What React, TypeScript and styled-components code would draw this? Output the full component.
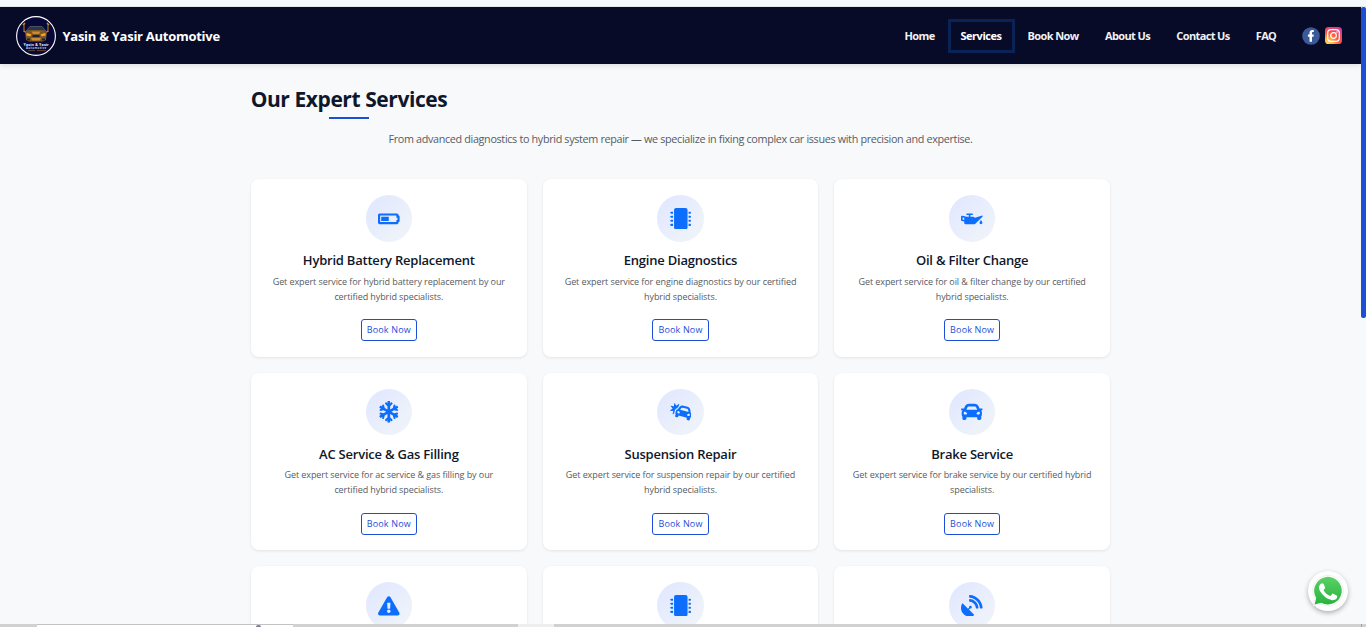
import React from "react";
import styled, { createGlobalStyle } from "styled-components";
import {
  FaBatteryHalf,
  FaCar,
  FaCarCrash,
  FaExclamationTriangle,
  FaMicrochip,
  FaOilCan,
  FaSatelliteDish,
  FaSnowflake,
} from "react-icons/fa";

const GlobalStyle = createGlobalStyle`
  *, *::before, *::after { box-sizing: border-box; }
  body {
    margin: 0;
    overflow: hidden;
    background: #f8f9fb;
    font-family: "Segoe UI", "Open Sans", "Noto Sans", sans-serif;
  }
`;

const Screen = styled.div`
  height: 627px;
  display: flex;
  flex-direction: column;
  overflow: hidden;
`;

const TopStrip = styled.div`
  flex: 0 0 7px;
  background: #f5f9fe;
  border-bottom: 1px solid #dfe7ef;
`;

const Viewport = styled.div`
  flex: 1;
  min-height: 0;
  display: flex;
`;

const Page = styled.div`
  flex: 1;
  min-width: 0;
  overflow: hidden;
  position: relative;
`;

const ScrollTrack = styled.div`
  flex: 0 0 5px;
  background: #f8f9fb;
`;

const ScrollThumb = styled.div`
  height: 311px;
  border-radius: 2px;
  background: #1d4ed8;
`;

const Header = styled.header`
  height: 57px;
  padding: 0 19px 0 16px;
  display: flex;
  align-items: center;
  justify-content: space-between;
  background: #070b28;
  box-shadow: 0 2px 5px rgba(0, 0, 0, 0.1);
`;

const Brand = styled.div`
  display: flex;
  align-items: center;
  gap: 6.5px;
  color: #fff;
  font-size: 13px;
  font-weight: 700;
  letter-spacing: -0.27px;
  white-space: nowrap;
`;

const Nav = styled.nav`
  display: flex;
  align-items: center;
`;

const NavItem = styled.a<{ $width: number; $active?: boolean }>`
  width: ${(p) => p.$width}px;
  height: 34px;
  display: flex;
  align-items: center;
  justify-content: center;
  border: 3px solid ${(p) => (p.$active ? "#0a2357" : "transparent")};
  color: ${(p) => (p.$active ? "#fff" : "#f0f1f5")};
  font-size: 11px;
  font-weight: 700;
  letter-spacing: ${(p) => (p.$active ? "-0.46px" : "-0.62px")};
  white-space: nowrap;
`;

const Socials = styled.div`
  display: flex;
  gap: 5px;
  margin-left: 12.5px;
`;

const Main = styled.main`
  width: 859px;
  margin: 0 auto 0 251px;
`;

const Heading = styled.h1`
  width: 196px;
  margin: 0;
  padding-top: 19px;
  display: flex;
  flex-direction: column;
  align-items: center;
  color: #0f172a;
  font-size: 21px;
  line-height: 32px;
  font-weight: 700;
  letter-spacing: -0.42px;
  white-space: nowrap;

  &::after {
    content: "";
    width: 40px;
    height: 2px;
    margin-top: 2px;
    background: #1d4ed8;
  }
`;

const Lead = styled.p`
  margin: 11px 0 31.4px;
  color: #555b63;
  font-size: 10.8px;
  line-height: 18px;
  text-align: center;
  letter-spacing: -0.335px;
  white-space: nowrap;
`;

const Grid = styled.div`
  display: grid;
  grid-template-columns: repeat(3, 1fr);
  gap: 16px;
`;

const Card = styled.article`
  height: 177.5px;
  padding-top: 16px;
  display: flex;
  flex-direction: column;
  align-items: center;
  border-radius: 8px;
  background: #fff;
  box-shadow: 0 1px 3px rgba(0, 0, 0, 0.09);
`;

const IconDisc = styled.div`
  width: 46.4px;
  height: 46.4px;
  display: grid;
  place-items: center;
  border-radius: 50%;
  background: linear-gradient(135deg, #e0e7ff, #f1f5f9);
  color: #0d6efd;
  font-size: 21.6px;

  svg { display: block; }
`;

const CardTitle = styled.h2`
  margin: 9.6px 0 0;
  color: #0f172a;
  font-size: 13px;
  line-height: 18px;
  font-weight: 600;
  letter-spacing: -0.22px;
  white-space: nowrap;
`;

const CardText = styled.p`
  margin: 4.4px 0 0;
  color: #555b63;
  font-size: 9px;
  line-height: 15px;
  text-align: center;
  letter-spacing: -0.08px;
  white-space: nowrap;
`;

const BookButton = styled.button`
  width: 56.5px;
  height: 22px;
  margin-top: 15.4px;
  padding: 0 0 0.6px;
  border: 1px solid #1d4ed8;
  border-radius: 3px;
  background: #fff;
  color: #1d4ed8;
  font: inherit;
  font-size: 9px;
  letter-spacing: 0.15px;
  white-space: nowrap;
`;

const ChatButton = styled.div`
  position: absolute;
  right: 13px;
  bottom: 13px;
  width: 40px;
  height: 40px;
  display: grid;
  place-items: center;
  border-radius: 50%;
  background: #fff;
  box-shadow: 0 2px 5px rgba(0, 0, 0, 0.3);
`;

const BottomStrip = styled.div`
  flex: 0 0 3px;
  display: flex;
  background: #d1d1d1;
`;

const StripTab = styled.div`
  width: 256px;
  margin-left: 37px;
  border-top: 1px solid #c2c2c2;
  background: #fff;

  &::after {
    content: "";
    display: block;
    width: 5px;
    height: 2px;
    margin-left: 219px;
    border-radius: 3px 3px 0 0;
    background: #8a7c92;
  }
`;

const StripGap = styled.div`
  width: 36px;
  margin-left: 225px;
  background: #eeeeee;
`;

const StripEdge = styled.div`
  width: 1px;
  margin-left: 807px;
  background: #a0a0a0;
`;

const BrandLogo = () => (
  <svg width="40" height="40" viewBox="0 0 40 40">
    <circle cx="20" cy="20" r="19.4" fill="#070838" stroke="#fff" strokeWidth="1.1" />
    <path d="M8 8v8M32 8v8" stroke="#a86b1c" strokeWidth="1.2" />
    <path d="M7 9l2-2M33 9l-2-2M8 15l4 3M32 15l-4 3" stroke="#d18a22" strokeWidth="1.4" />
    <path d="M10 15l4-4.5h12l4 4.5z" fill="#27364c" stroke="#56606a" strokeWidth="0.8" />
    <path d="M9 15.5l4.5-1.5h13l4.5 1.5-1 8.5-3 1.5h-14l-3-1.5z" fill="#7c5526" />
    <path d="M10.5 17l5 1.3-1 2-4-.6zM29.5 17l-5 1.3 1 2 4-.6z" fill="#f2a32b" />
    <path d="M15.5 15.5h9l-1.5 2.5h-6zM15 22h10l-1.3 2.6h-7.4z" fill="#d08a2c" />
    <path d="M16.5 19h7v2h-7zM11 22.5h3v2h-3zM26 22.5h3v2h-3z" fill="#1a2440" />
    <text x="20" y="29.8" fill="#eef" fontSize="3.7" fontWeight="700" textAnchor="middle" textLength="25">Yasin &amp; Yasir</text>
    <text x="20" y="32.6" fill="#ccd" fontSize="2.8" textAnchor="middle" textLength="20">Automotive</text>
    <path d="M12 34.6h7M21 34.6h9" stroke="#8c5c1c" strokeWidth="0.7" />
  </svg>
);

const FacebookLogo = () => (
  <svg width="18" height="18" viewBox="0 0 18 18">
    <circle cx="9" cy="9" r="8.8" fill="#3b5998" />
    <path
      d="M7.5 14.8V9.8H5.9V7.5h1.6V6c0-1.9 1.1-3 2.8-3 .8 0 1.5.1 1.5.1v2h-.8c-.8 0-1 .5-1 1v1.4h1.8l-.3 2.3H10v5z"
      fill="#fff"
    />
  </svg>
);

const InstagramLogo = () => (
  <svg width="17" height="17" viewBox="0 0 17 17">
    <defs>
      <radialGradient id="insta" cx="0.15" cy="1.02" r="1.25">
        <stop offset="0" stopColor="#ffdd55" />
        <stop offset="0.25" stopColor="#ffb84a" />
        <stop offset="0.55" stopColor="#ff543e" />
        <stop offset="1" stopColor="#c837ab" />
      </radialGradient>
    </defs>
    <rect width="17" height="17" rx="3.6" fill="url(#insta)" />
    <g fill="none" stroke="#fff" strokeWidth="1.2">
      <rect x="2.7" y="2.7" width="11.6" height="11.6" rx="3.3" />
      <circle cx="8.5" cy="8.5" r="2.8" />
    </g>
    <circle cx="12" cy="5" r="0.8" fill="#fff" />
  </svg>
);

const WhatsAppLogo = () => (
  <svg width="32" height="32" viewBox="0 0 32 32">
    <defs>
      <linearGradient id="wa" x1="0" y1="0" x2="0" y2="1">
        <stop offset="0" stopColor="#5bd066" />
        <stop offset="1" stopColor="#27b43e" />
      </linearGradient>
    </defs>
    <path
      d="M1 30.9l2-7.3A15.2 15.2 0 1 1 8.6 29z"
      fill="#fff"
      stroke="#e6e6e6"
      strokeWidth="0.7"
    />
    <path d="M2.6 29.5l1.6-6.6A13.8 13.8 0 1 1 9.2 27.7z" fill="url(#wa)" />
    <path
      d="M11.8 9.2c-.3-.7-.6-.8-1-.8h-.9c-.4 0-.9.1-1.3.6-.5.5-1.6 1.6-1.6 3.7s1.6 4.3 1.9 4.6c.2.3 3.1 4.9 7.6 6.7 3.8 1.5 4.6 1.2 5.4 1.1.8-.1 2.6-1.1 3-2.1.4-1 .4-1.9.3-2.1-.2-.4-.6-.5-1-.7l-3-1.5c-.5-.1-.8-.2-1.1.3l-1.4 1.7c-.3.3-.5.3-1 .1-.4-.2-1.9-.7-3.5-2.2-1.3-1.2-2.2-2.6-2.5-3.1-.2-.4 0-.7.2-.9l.7-.8c.2-.3.3-.5.4-.8.2-.3.1-.5 0-.8z"
      fill="#fff"
    />
  </svg>
);

const navItems = [
  { label: "Home", width: 56 },
  { label: "Services", width: 67, active: true },
  { label: "Book Now", width: 77 },
  { label: "About Us", width: 72 },
  { label: "Contact Us", width: 79 },
  { label: "FAQ", width: 47 },
];

const services = [
  { icon: FaBatteryHalf, title: "Hybrid Battery Replacement", lines: ["Get expert service for hybrid battery replacement by our", "certified hybrid specialists."] },
  { icon: FaMicrochip, title: "Engine Diagnostics", lines: ["Get expert service for engine diagnostics by our certified", "hybrid specialists."] },
  { icon: FaOilCan, title: "Oil & Filter Change", lines: ["Get expert service for oil & filter change by our certified", "hybrid specialists."] },
  { icon: FaSnowflake, title: "AC Service & Gas Filling", lines: ["Get expert service for ac service & gas filling by our", "certified hybrid specialists."] },
  { icon: FaCarCrash, title: "Suspension Repair", lines: ["Get expert service for suspension repair by our certified", "hybrid specialists."] },
  { icon: FaCar, title: "Brake Service", lines: ["Get expert service for brake service by our certified hybrid", "specialists."] },
  { icon: FaExclamationTriangle },
  { icon: FaMicrochip },
  { icon: FaSatelliteDish },
];

export default function App() {
  return (
    <Screen>
      <GlobalStyle />
      <TopStrip />
      <Viewport>
        <Page>
          <Header>
            <Brand>
              <BrandLogo />
              Yasin &amp; Yasir Automotive
            </Brand>
            <Nav>
              {navItems.map((n) => (
                <NavItem key={n.label} $width={n.width} $active={n.active}>
                  {n.label}
                </NavItem>
              ))}
              <Socials>
                <FacebookLogo />
                <InstagramLogo />
              </Socials>
            </Nav>
          </Header>
          <Main>
            <Heading>Our Expert Services</Heading>
            <Lead>
              From advanced diagnostics to hybrid system repair — we specialize in fixing complex car issues with
              precision and expertise.
            </Lead>
            <Grid>
              {services.map(({ icon: Icon, title, lines }, i) => (
                <Card key={i}>
                  <IconDisc>
                    <Icon />
                  </IconDisc>
                  {title && lines && (
                    <>
                      <CardTitle>{title}</CardTitle>
                      <CardText>
                        {lines[0]}
                        <br />
                        {lines[1]}
                      </CardText>
                      <BookButton>Book Now</BookButton>
                    </>
                  )}
                </Card>
              ))}
            </Grid>
          </Main>
          <ChatButton>
            <WhatsAppLogo />
          </ChatButton>
        </Page>
        <ScrollTrack>
          <ScrollThumb />
        </ScrollTrack>
      </Viewport>
      <BottomStrip>
        <StripTab />
        <StripGap />
        <StripEdge />
      </BottomStrip>
    </Screen>
  );
}
